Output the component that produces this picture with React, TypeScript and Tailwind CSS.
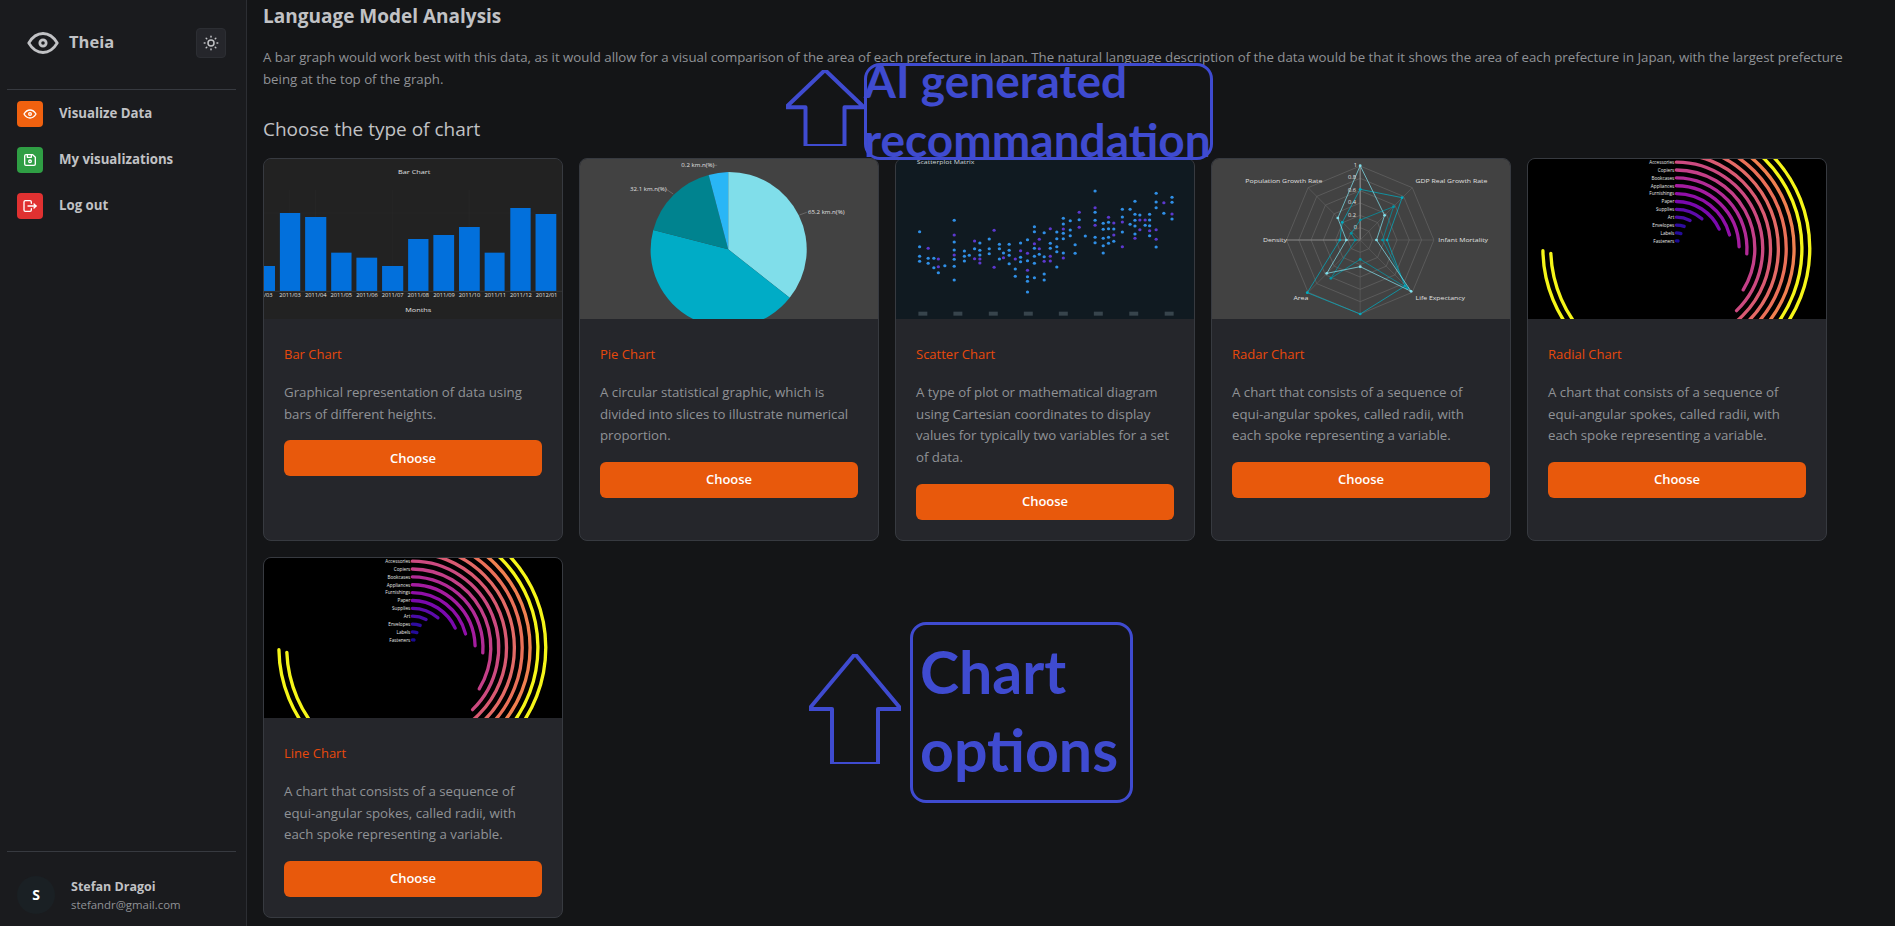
import { TbDeviceFloppy, TbEye, TbLogout, TbSun } from 'react-icons/tb';

const font = "font-['Open_Sans',sans-serif]";

const BARS = [
  [21, 48, 348], [60, 110, 189], [122, 174, 201], [186, 236, 308], [248, 299, 323], [311, 363, 348],
  [375, 425, 267], [437, 488, 255], [500, 551, 231], [563, 612, 308], [626, 676, 174], [688, 739, 192],
];
const BAR_LABELS = ['2011/03', '2011/04', '2011/05', '2011/06', '2011/07', '2011/08', '2011/09', '2011/10', '2011/11', '2011/12', '2012/01'];

function BarChart() {
  return (
    <svg viewBox="21 27 732 480" preserveAspectRatio="none" className="block h-full w-full bg-[#222222]">
      <text x="390" y="73" fill="#e0e0e0" fontSize="18" textAnchor="middle">Bar Chart</text>
      {[336, 148, 83, 525].map((x) => <line key={x} x1={x} x2={x} y1="120" y2="423" stroke="#2e2e2e" />)}
      <line x1="21" x2="753" y1="189" y2="189" stroke="#2e2e2e" />
      {BARS.map(([a, b, top]) => <rect key={a} x={a} y={top} width={b - a} height={423 - top} fill="#0270dc" />)}
      <line x1="21" x2="753" y1="424" y2="424" stroke="#555" />
      <text x="21" y="441" fill="#e0e0e0" fontSize="14">/03</text>
      {BAR_LABELS.map((t, i) => <text key={t} x={85 + i * 63} y="441" fill="#e0e0e0" fontSize="14" textAnchor="middle">{t}</text>)}
      <text x="400" y="485" fill="#e0e0e0" fontSize="18" textAnchor="middle">Months</text>
    </svg>
  );
}

function PieChart() {
  return (
    <svg viewBox="795 27 732 480" preserveAspectRatio="none" className="block h-full w-full bg-[#424242]">
      <path d="M1159 298 L1159 66 A191 232 0 0 1 1310 443 Z" fill="#80deea" />
      <path d="M1159 298 L1310 443 A191 232 0 0 1 975 240 Z" fill="#00acc6" />
      <path d="M1159 298 L975 240 A191 232 0 0 1 1111 75 Z" fill="#00838f" />
      <path d="M1159 298 L1111 75 A191 232 0 0 1 1159 66 Z" fill="#29b6f6" />
      <g fill="#e0e0e0" fontSize="15">
        <text x="1044" y="50">0.2 km.n(%)</text>
        <text x="918" y="122">32.1 km.n(%)</text>
        <text x="1355" y="192">65.2 km.n(%)</text>
      </g>
      <g stroke="#aaa" fill="none">
        <path d="M1124 46 L1132 46" />
        <path d="M1006 117 L1024 132" />
        <path d="M1334 195 L1352 187" />
      </g>
    </svg>
  );
}

const BLUE: [number, number[]][] = [
  [72, [245, 290, 319, 334]], [93, [325, 340]], [107, [325, 353]], [118, [368]], [134, [347]],
  [157, [211, 276, 300, 328, 349, 390]], [182, [303, 319, 333]], [194, [316]], [207, [296]],
  [220, [279, 301, 315]], [243, [267, 296, 311]], [268, [283, 296, 327]], [278, [309]],
  [292, [283, 301, 316, 341]], [307, [357, 379]], [320, [279, 322, 335]], [337, [269, 332, 380, 394, 426]],
  [354, [230, 245, 295, 319, 340, 383]], [366, [313]], [378, [248, 320, 372, 390]], [393, [280, 295]],
  [409, [246, 266, 290, 305, 351]], [425, [205, 222, 250, 266, 309]], [442, [212, 240, 257]], [454, [284, 310]],
  [464, [209]], [479, [258]], [503, [123, 187, 211, 262, 278]], [523, [220, 238, 265, 287, 309]],
  [536, [217, 236, 262, 280]], [549, [237, 274]], [570, [178, 201, 246]], [589, [178, 223]],
  [601, [154, 193, 211, 228, 252]], [613, [195]], [626, [226]], [637, [193, 210, 227, 257]],
  [653, [130, 156, 173, 291]], [672, [190]], [692, [142, 157, 207]],
];
const PURPLE: [number, number[]][] = [
  [93, [295]], [118, [327, 350]], [157, [255, 315]], [207, [273, 326]], [220, [327, 339]], [255, [241, 352]],
  [278, [323]], [307, [327]], [320, [302]], [337, [310, 361]], [354, [281]], [366, [268, 296]], [378, [334]],
  [393, [236, 319, 333]], [425, [237, 324]], [464, [187, 232]], [503, [173, 226]], [536, [202]], [549, [219, 255]],
  [570, [216, 290]], [601, [265]], [613, [210, 239]], [626, [210]], [637, [242]], [653, [239, 268]], [672, [158]], [692, [192]],
];

function ScatterChart() {
  return (
    <svg viewBox="14 27 732 480" preserveAspectRatio="none" className="block h-full w-full bg-[#101a21]">
      <text x="65" y="42" fill="#cfd8dc" fontSize="17">Scatterplot Matrix</text>
      {BLUE.flatMap(([x, ys]) => ys.map((y) => <ellipse key={`b${x}-${y}`} cx={x} cy={y} rx="4" ry="4.5" fill="#2f8fe6" />))}
      {PURPLE.flatMap(([x, ys]) => ys.map((y) => <ellipse key={`p${x}-${y}`} cx={x} cy={y} rx="4" ry="4.5" fill="#5c38cf" />))}
      {[69, 155, 242, 328, 414, 500, 587, 674].map((x) => <rect key={x} x={x} y="485" width="22" height="12" fill="#37444c" />)}
    </svg>
  );
}

const CX = 1152;
const CY = 270;
const octagon = (r: number) =>
  [0, 1, 2, 3, 4, 5, 6, 7]
    .map((i) => {
      const a = (i * Math.PI) / 4;
      return `${CX + (r / 222) * 181 * Math.sin(a)},${CY - r * Math.cos(a)}`;
    })
    .join(' ');

const RADAR = [
  { color: '#00acc1', points: [[1152, 118], [1255, 143], [1218, 270], [1262, 408], [1152, 492], [1022, 428], [1102, 270], [1108, 217]] },
  { color: '#0097a7', points: [[1152, 210], [1234, 170], [1207, 270], [1268, 415], [1152, 328], [1080, 385], [1140, 270], [1130, 250]] },
  { color: '#80deea', points: [[1152, 47], [1212, 196], [1192, 270], [1277, 424], [1152, 350], [1070, 370], [1118, 270], [1097, 204]] },
];

function RadarChart() {
  return (
    <svg viewBox="788 27 732 480" preserveAspectRatio="none" className="block h-full w-full bg-[#424242]">
      {[37, 74, 111, 148, 185, 222].map((r) => <polygon key={r} points={octagon(r)} fill="none" stroke="#6f6f6f" strokeWidth="1.5" />)}
      {[0, 1, 2, 3, 4, 5, 6, 7].map((i) => {
        const a = (i * Math.PI) / 4;
        return <line key={i} x1={CX} y1={CY} x2={CX + 181 * Math.sin(a)} y2={CY - 222 * Math.cos(a)} stroke={i === 0 || i === 6 ? '#8a8a8a' : '#666'} strokeWidth={i === 0 || i === 6 ? 3 : 1.5} />;
      })}
      {RADAR.map((p) => (
        <g key={p.color}>
          <polygon points={p.points.map((q) => q.join(',')).join(' ')} fill="none" stroke={p.color} strokeWidth="2" />
          {p.points.map(([x, y]) => <ellipse key={`${x}-${y}`} cx={x} cy={y} rx="3.5" ry="4" fill={p.color} />)}
        </g>
      ))}
      <g fill="#e0e0e0" fontSize="17">
        <text x="870" y="98">Population Growth Rate</text>
        <text x="1288" y="98">GDP Real Growth Rate</text>
        <text x="1344" y="275">Infant Mortality</text>
        <text x="1288" y="449">Life Expectancy</text>
        <text x="988" y="449">Area</text>
        <text x="913" y="275">Density</text>
      </g>
      <g fill="#e0e0e0" fontSize="14">
        <text x="1136" y="52">1</text>
        <text x="1122" y="88">0.8</text>
        <text x="1122" y="125">0.6</text>
        <text x="1122" y="163">0.4</text>
        <text x="1122" y="200">0.2</text>
        <text x="1136" y="237">0</text>
      </g>
    </svg>
  );
}

const RINGS = [
  { color: '#1a0b93', end: [503, 273] },
  { color: '#250c9b', end: [512, 250] },
  { color: '#2f0ca0', end: [522, 228] },
  { color: '#4a0ca8', end: [540, 210] },
  { color: '#5e0bab', end: [577, 204] },
  { color: '#7a09ae', end: [630, 236] },
  { color: '#900fa8', end: [661, 254] },
  { color: '#a51ca0', end: [691, 290] },
  { color: '#b22b96', end: [714, 312] },
  { color: '#c43f88', end: [703, 422] },
  { color: '#cc4a80', end: [682, 485] },
  { color: '#d95a72', end: [498, 579] },
  { color: '#e46a66', end: [498, 602] },
  { color: '#ea7058', end: [498, 626] },
  { color: '#f08050', end: [498, 650] },
  { color: '#f5f519', end: [127, 310] },
  { color: '#f5f519', end: [103, 302] },
];
const RING_LABELS = ['Accessories', 'Copiers', 'Bookcases', 'Appliances', 'Furnishings', 'Paper', 'Supplies', 'Art', 'Envelopes', 'Labels', 'Fasteners'];

function RadialChart() {
  return (
    <svg viewBox="52 27 896 480" preserveAspectRatio="none" className="block h-full w-full bg-black">
      {RINGS.map((ring, i) => {
        const r = (i + 1) * 23.6;
        const angle = Math.atan2(ring.end[0] - 498, 296 - ring.end[1]);
        const sweepAngle = angle < 0 ? angle + 2 * Math.PI : angle;
        const ex = 498 + r * Math.sin(sweepAngle);
        const ey = 296 - r * Math.cos(sweepAngle);
        return (
          <path
            key={i}
            d={`M498 ${296 - r} A${r} ${r} 0 ${sweepAngle > Math.PI ? 1 : 0} 1 ${ex} ${ey}`}
            fill="none"
            stroke={ring.color}
            strokeWidth="10"
            strokeLinecap="round"
          />
        );
      })}
      {RING_LABELS.map((t, i) => <text key={t} x="492" y={42 + i * 23.6} fill="#e8e8e8" fontSize="14" textAnchor="end">{t}</text>)}
    </svg>
  );
}

const charts = [
  { title: 'Bar Chart', text: 'Graphical representation of data using bars of different heights.', Chart: BarChart },
  { title: 'Pie Chart', text: 'A circular statistical graphic, which is divided into slices to illustrate numerical proportion.', Chart: PieChart },
  { title: 'Scatter Chart', text: 'A type of plot or mathematical diagram using Cartesian coordinates to display values for typically two variables for a set of data.', Chart: ScatterChart },
  { title: 'Radar Chart', text: 'A chart that consists of a sequence of equi-angular spokes, called radii, with each spoke representing a variable.', Chart: RadarChart },
  { title: 'Radial Chart', text: 'A chart that consists of a sequence of equi-angular spokes, called radii, with each spoke representing a variable.', Chart: RadialChart },
  { title: 'Line Chart', text: 'A chart that consists of a sequence of equi-angular spokes, called radii, with each spoke representing a variable.', Chart: RadialChart },
];

const navItems = [
  { label: 'Visualize Data', Icon: TbEye, color: 'bg-[#f0610f]' },
  { label: 'My visualizations', Icon: TbDeviceFloppy, color: 'bg-[#2f9e44]' },
  { label: 'Log out', Icon: TbLogout, color: 'bg-[#e03131]' },
];

function Arrow({ className, points }: { className: string; points: string }) {
  return (
    <svg className={`absolute ${className}`} viewBox="0 0 100 100" preserveAspectRatio="none">
      <polygon points={points} fill="none" stroke="#3f4bd0" strokeWidth="4" vectorEffect="non-scaling-stroke" strokeLinejoin="round" />
    </svg>
  );
}

export default function App() {
  return (
    <div className={`relative flex h-[926px] overflow-hidden bg-[#141517] ${font}`}>
      <aside className="flex h-full w-[247px] shrink-0 flex-col border-r border-[#2c2e33] bg-[#1a1b1e] pl-[7px] pr-[10px]">
        <div className="flex h-[90px] items-center justify-between border-b border-[#373a40] pb-[4px] pl-[17px] pr-[10px]">
          <div className="flex items-center gap-[7px]">
            <TbEye className="text-[#c1c2c5]" size={38} strokeWidth={1.75} />
            <span className="text-[16.5px] font-bold text-[#c1c2c5]">Theia</span>
          </div>
          <button className="flex h-[30px] w-[30px] items-center justify-center rounded border border-[#2c2e33] bg-[#25262b] text-[#c1c2c5]">
            <TbSun size={18} />
          </button>
        </div>
        <nav className="flex flex-col gap-5 pl-[10px] pt-[11px]">
          {navItems.map(({ label, Icon, color }) => (
            <a key={label} className="flex items-center gap-4 text-[13.25px] font-bold text-[#c1c2c5]">
              <span className={`flex h-[26px] w-[26px] items-center justify-center rounded ${color} text-white`}>
                <Icon size={16} />
              </span>
              {label}
            </a>
          ))}
        </nav>
        <div className="mt-auto flex h-[75px] items-center gap-4 border-t border-[#373a40] pl-[10px] pt-[12px]">
          <span className="flex h-[38px] w-[38px] items-center justify-center rounded-full bg-[#1a2024] text-sm font-bold text-white">S</span>
          <div>
            <div className="text-[12.5px] font-bold leading-5 text-[#c1c2c5]">Stefan Dragoi</div>
            <div className="text-[11.4px] leading-4 text-[#909296]">stefandr@gmail.com</div>
          </div>
        </div>
      </aside>

      <main className="flex-1 pl-4">
        <h1 className="pt-[4px] text-[19px] font-bold leading-6 text-[#c1c2c5]">Language Model Analysis</h1>
        <p className="mt-[18px] w-[1600px] text-[13.25px] leading-[22px] text-[#909296]">
          A bar graph would work best with this data, as it would allow for a visual comparison of the area of each prefecture in Japan. The natural language description of the data would be that it shows the area of each prefecture in Japan, with the largest prefecture being at the top of the graph.
        </p>
        <h2 className="mt-[25px] text-[19px] leading-7 text-[#c1c2c5]">Choose the type of chart</h2>
        <div className="mt-[15px] grid grid-cols-[repeat(5,300px)] gap-4">
          {charts.map(({ title, text, Chart }) => (
            <article key={title} className="flex flex-col overflow-hidden rounded-lg border border-[#373a40] bg-[#25262b]">
              <div className="h-[160px]">
                <Chart />
              </div>
              <div className="px-5 pb-5 pt-6">
                <h3 className="text-[13px] leading-[22px] text-[#e8490c]">{title}</h3>
                <p className="mt-[17px] text-[13.25px] leading-[21.7px] text-[#909296]">{text}</p>
                <button className="mt-[15px] h-9 w-full rounded-md bg-[#e8590c] text-[13px] font-semibold text-white">Choose</button>
              </div>
            </article>
          ))}
        </div>
      </main>

      <Arrow className="left-[786px] top-[70px] h-[76px] w-[78px]" points="50,0 0,49 25,49 25,100 75,100 75,49 100,49" />
      <div className="absolute left-[864px] top-[63px] h-[97px] w-[349px] rounded-2xl border-[3px] border-[#3f4bd0]">
        <div className="absolute left-[-3px] top-[-15px] font-['Lato',sans-serif] text-[46px] font-bold leading-[59px] text-[#3f4bd0] whitespace-nowrap">
          AI generated
          <br />
          recommandation
        </div>
      </div>

      <Arrow className="left-[809px] top-[654px] h-[110px] w-[92px]" points="50,0 0,50 25,50 25,100 75,100 75,50 100,50" />
      <div className="absolute left-[910px] top-[622px] h-[181px] w-[223px] rounded-2xl border-[3px] border-[#3f4bd0]">
        <div className="absolute left-[7px] top-[8px] font-['Lato',sans-serif] text-[59px] font-bold leading-[78px] text-[#3f4bd0]">
          Chart
          <br />
          options
        </div>
      </div>
    </div>
  );
}
